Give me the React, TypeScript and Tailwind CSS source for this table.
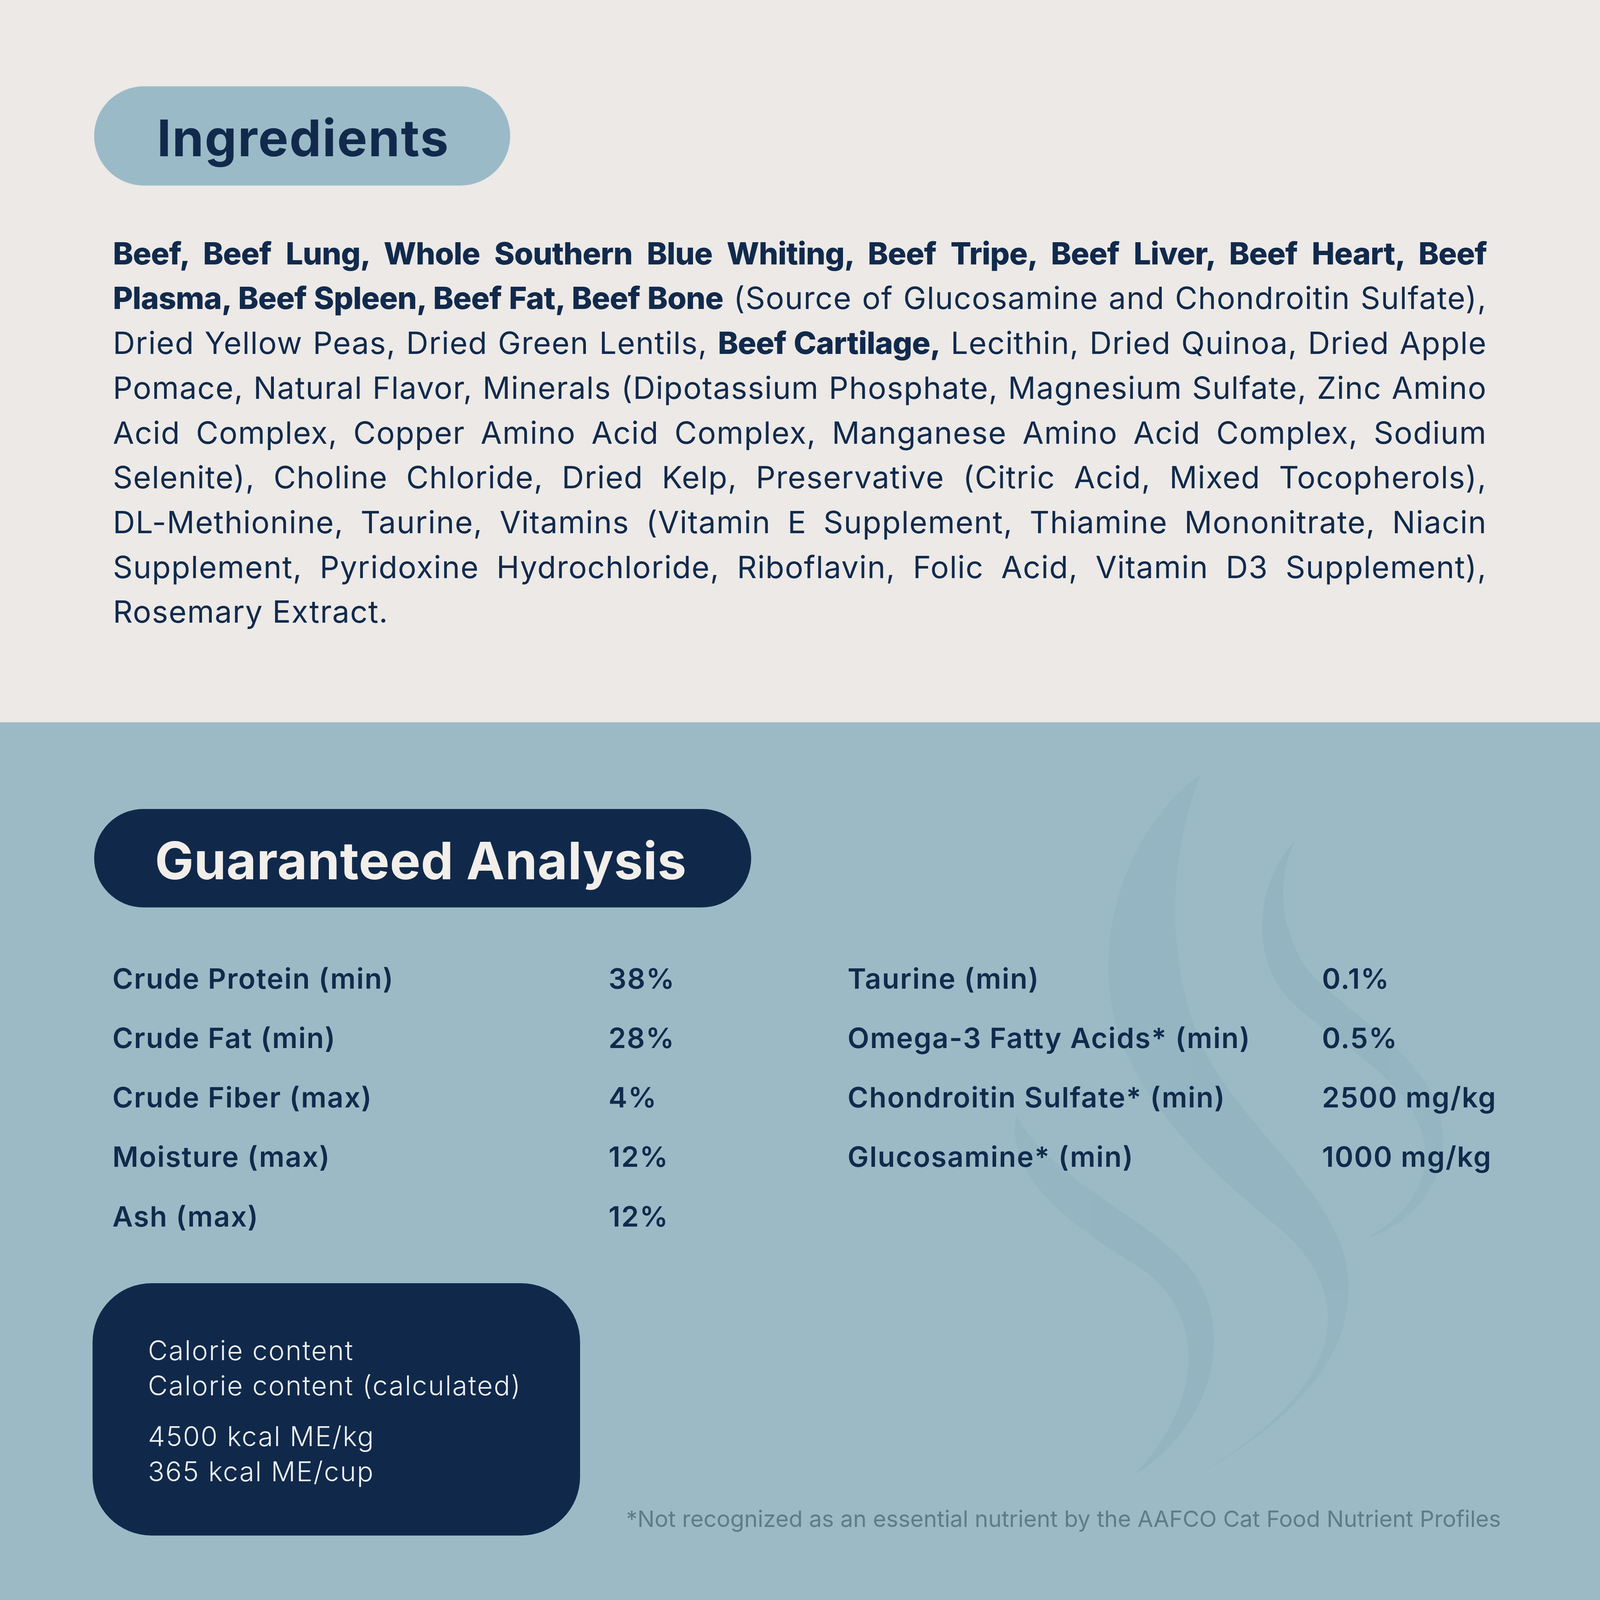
import React from "react";

const navy = "text-[#112a4c]";

type Seg = { t: string; b?: boolean };

const lines: Seg[][] = [
  [{ t: "Beef, Beef Lung, Whole Southern Blue Whiting, Beef Tripe, Beef Liver, Beef Heart, Beef", b: true }],
  [
    { t: "Plasma, Beef Spleen, Beef Fat, Beef Bone", b: true },
    { t: " (Source of Glucosamine and Chondroitin Sulfate)," },
  ],
  [
    { t: "Dried Yellow Peas, Dried Green Lentils, " },
    { t: "Beef Cartilage,", b: true },
    { t: " Lecithin, Dried Quinoa, Dried Apple" },
  ],
  [{ t: "Pomace, Natural Flavor, Minerals (Dipotassium Phosphate, Magnesium Sulfate, Zinc Amino" }],
  [{ t: "Acid Complex, Copper Amino Acid Complex, Manganese Amino Acid Complex, Sodium" }],
  [{ t: "Selenite), Choline Chloride, Dried Kelp, Preservative (Citric Acid, Mixed Tocopherols)," }],
  [{ t: "DL-Methionine, Taurine, Vitamins (Vitamin E Supplement, Thiamine Mononitrate, Niacin" }],
  [{ t: "Supplement, Pyridoxine Hydrochloride, Riboflavin, Folic Acid, Vitamin D3 Supplement)," }],
  [{ t: "Rosemary Extract." }],
];

const left = [
  ["Crude Protein (min)", "38%"],
  ["Crude Fat (min)", "28%"],
  ["Crude Fiber (max)", "4%"],
  ["Moisture (max)", "12%"],
  ["Ash (max)", "12%"],
];

const right = [
  ["Taurine (min)", "0.1%"],
  ["Omega-3 Fatty Acids* (min)", "0.5%"],
  ["Chondroitin Sulfate* (min)", "2500 mg/kg"],
  ["Glucosamine* (min)", "1000 mg/kg"],
];

function Flames() {
  return (
    <svg
      className="absolute left-0 top-0 w-full h-full pointer-events-none"
      viewBox="0 2822 6250 3428"
      preserveAspectRatio="none"
    >
      <g fill="#8aabb9" opacity={0.35}>
        <path d="M 4691 3024 C 4420 3220, 4290 3600, 4340 3912 C 4390 4250, 4700 4560, 5000 4800 C 5280 5040, 5300 5400, 4673 5762 C 5150 5500, 5330 5200, 5250 4900 C 5160 4600, 4800 4350, 4680 4050 C 4560 3750, 4560 3350, 4691 3024 Z" />
        <path d="M 5061 3283 C 4900 3450, 4880 3750, 5043 3912 C 5200 4070, 5500 4200, 5561 4450 C 5600 4620, 5480 4760, 5339 4837 C 5600 4750, 5700 4500, 5598 4282 C 5500 4080, 5250 3950, 5100 3780 C 4990 3600, 4990 3420, 5061 3283 Z" />
        <path d="M 3970 4356 C 3920 4600, 4200 4800, 4450 4950 C 4700 5120, 4720 5450, 4432 5762 C 4760 5550, 4800 5200, 4680 5000 C 4550 4780, 4100 4620, 3970 4356 Z" />
      </g>
    </svg>
  );
}

export default function App() {
  return (
    <div className="w-screen h-[100vw] overflow-hidden font-['Inter','Liberation_Sans',sans-serif]">
      {/* Ingredients */}
      <section className="h-[45.152vw] bg-[#ece9e6] pl-[5.872vw] pt-[5.392vw]">
        <div className="w-[26.016vw] h-[6.208vw] rounded-full bg-[#9bbac7] flex items-center pl-[3.936vw] pt-[0.224vw]">
          <h2 className={`text-[3.168vw] leading-none font-bold tracking-[0.02em] ${navy}`}>Ingredients</h2>
        </div>
        <div className={`ml-[1.184vw] mt-[2.848vw] w-[85.872vw] text-[1.92vw] ${navy}`}>
          {lines.map((segs, i) => (
            <div
              key={i}
              className={`h-[2.8vw] leading-[2.8vw] whitespace-nowrap ${
                i < lines.length - 1 ? "[text-align-last:justify] text-justify" : ""
              }`}
            >
              {segs.map((s, j) => (
                <span
                  key={j}
                  className={s.b ? "font-extrabold tracking-[-0.012em]" : "font-normal tracking-[0.02em]"}
                >
                  {s.t}
                </span>
              ))}
            </div>
          ))}
        </div>
      </section>

      {/* Guaranteed Analysis */}
      <section className="relative h-[54.848vw] bg-[#9bbac6]">
        <Flames />
        <div className="relative pl-[5.872vw] pr-[6.192vw] pt-[5.408vw]">
          <div className="w-[41.072vw] h-[6.16vw] rounded-full bg-[#10294b] flex items-center pl-[3.808vw] pt-[0.32vw]">
            <h2 className="text-[3.232vw] leading-none font-bold tracking-[0.005em] text-[#f2eeea]">
              Guaranteed Analysis
            </h2>
          </div>

          <div
            className={`mt-[2.592vw] ml-[1.152vw] flex items-start text-[1.76vw] font-semibold tracking-[0.03em] ${navy}`}
          >
            <div className="grid grid-cols-[31.008vw_14.944vw] content-start">
              {left.map(([k, v]) => (
                <React.Fragment key={k}>
                  <div className="h-[3.712vw] leading-[3.712vw] whitespace-nowrap">{k}</div>
                  <div className="h-[3.712vw] leading-[3.712vw] whitespace-nowrap">{v}</div>
                </React.Fragment>
              ))}
            </div>
            <div className="grid grid-cols-[29.648vw_auto] content-start">
              {right.map(([k, v]) => (
                <React.Fragment key={k}>
                  <div className="h-[3.712vw] leading-[3.712vw] whitespace-nowrap">{k}</div>
                  <div className="h-[3.712vw] leading-[3.712vw] whitespace-nowrap">{v}</div>
                </React.Fragment>
              ))}
            </div>
          </div>

          <div className="mt-[2.32vw] -ml-[0.08vw] flex">
            <div className="w-[30.464vw] h-[15.776vw] shrink-0 rounded-[3.68vw] bg-[#10294b] pl-[3.456vw] pt-[3.136vw] text-[1.696vw] font-light leading-[2.192vw] tracking-[0.035em] text-[#eef0f1]">
              <div>Calorie content</div>
              <div>Calorie content (calculated)</div>
              <div className="mt-[0.992vw]">4500 kcal ME/kg</div>
              <div>365 kcal ME/cup</div>
            </div>
            <div className="flex-1 flex items-end justify-end pb-[0.32vw]">
              <p className="text-[1.424vw] leading-none text-[#5f7b88] whitespace-nowrap">
                *Not recognized as an essential nutrient by the AAFCO Cat Food Nutrient Profiles
              </p>
            </div>
          </div>
        </div>
      </section>
    </div>
  );
}
